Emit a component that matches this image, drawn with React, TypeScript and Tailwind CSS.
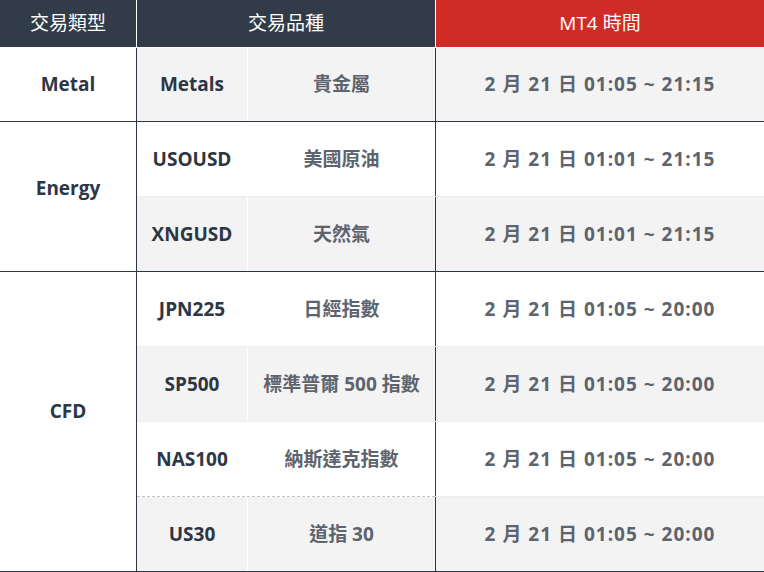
import React from "react";

type Row = { code: string; name: string; time: string; gray: boolean; sep?: "solid" | "dashed" };
type Group = { type: string; rows: Row[]; height: string; pad: string };

const groups: Group[] = [
  {
    type: "Metal",
    height: "h-[73px]",
    pad: "pb-0",
    rows: [{ code: "Metals", name: "貴金屬", time: "2 月 21 日 01:05 ~ 21:15", gray: true }],
  },
  {
    type: "Energy",
    height: "h-[74px]",
    pad: "pb-[16px]",
    rows: [
      { code: "USOUSD", name: "美國原油", time: "2 月 21 日 01:01 ~ 21:15", gray: false },
      { code: "XNGUSD", name: "天然氣", time: "2 月 21 日 01:01 ~ 21:15", gray: true, sep: "solid" },
    ],
  },
  {
    type: "CFD",
    height: "h-[74px]",
    pad: "pb-[20px]",
    rows: [
      { code: "JPN225", name: "日經指數", time: "2 月 21 日 01:05 ~ 20:00", gray: false },
      { code: "SP500", name: "標準普爾 500 指數", time: "2 月 21 日 01:05 ~ 20:00", gray: true, sep: "solid" },
      { code: "NAS100", name: "納斯達克指數", time: "2 月 21 日 01:05 ~ 20:00", gray: false, sep: "solid" },
      { code: "US30", name: "道指 30", time: "2 月 21 日 01:05 ~ 20:00", gray: true, sep: "dashed" },
    ],
  },
];

const font = { fontFamily: '"Open Sans", "Noto Sans CJK TC", sans-serif' };

export default function App() {
  return (
    <div className="w-[764px] h-[572px] bg-white overflow-hidden" style={font}>
      {/* Header */}
      <div className="flex h-[48px] border-b border-white text-white text-[19px]">
        <div className="w-[136px] bg-[#323c49] flex items-center justify-center">交易類型</div>
        <div className="w-px bg-white" />
        <div className="w-[298px] bg-[#323c49] flex items-center justify-center">交易品種</div>
        <div className="w-px bg-white" />
        <div className="flex-1 bg-[#d12b27] flex items-center justify-center">MT4 時間</div>
      </div>
      {/* Body */}
      {groups.map((g) => (
        <div key={g.type} className="flex border-b border-[#2d3645]">
          <div
            className={`w-[136px] bg-white flex items-center justify-center font-bold text-[19px] text-[#2d3645] ${g.pad}`}
          >
            {g.type}
          </div>
          <div className="flex-1 flex flex-col border-l border-[#2d3645]">
            {g.rows.map((r) => (
              <div key={r.code} className="flex flex-col">
                {r.sep === "solid" && <div className="h-px bg-[#eeeeee]" />}
                {r.sep === "dashed" && (
                  <div className="flex h-px">
                    <div className="w-[298px] border-t border-dashed border-[#c4c4c4]" />
                    <div className="flex-1 bg-[#eeeeee]" />
                  </div>
                )}
                <div className={`flex ${g.height} ${r.gray ? "bg-[#f3f3f3]" : "bg-white"}`}>
                  <div className="w-[110px] flex items-center justify-center font-bold text-[19px] text-[#2d3645]">
                    {r.code}
                  </div>
                  <div className="w-px bg-white" />
                  <div className="w-[187px] flex items-center justify-center font-bold text-[19px] text-[#5d646e]">
                    {r.name}
                  </div>
                  <div className="w-px bg-[#2d3645]" />
                  <div className="flex-1 flex items-center justify-center font-bold text-[19px] tracking-[1px] text-[#5d646e]">
                    {r.time}
                  </div>
                </div>
              </div>
            ))}
          </div>
        </div>
      ))}
    </div>
  );
}
